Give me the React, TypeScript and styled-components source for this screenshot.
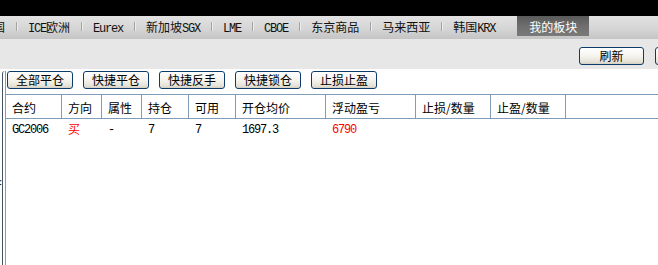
import React from 'react';
import styled, { createGlobalStyle } from 'styled-components';

const GlobalStyle = createGlobalStyle`
  html, body {
    margin: 0;
    padding: 0;
    background: #fff;
    overflow: hidden;
  }
  body {
    font-family: "Noto Sans CJK SC", "DejaVu Sans", sans-serif;
    font-size: 12px;
    color: #000;
  }
`;

const tabs = ['美国', 'ICE欧洲', 'Eurex', '新加坡SGX', 'LME', 'CBOE', '东京商品', '马来西亚', '韩国KRX'];
const actions = ['全部平仓', '快捷平仓', '快捷反手', '快捷锁仓', '止损止盈'];

const columns = [
  { title: '合约', width: 56 },
  { title: '方向', width: 40 },
  { title: '属性', width: 40 },
  { title: '持仓', width: 47 },
  { title: '可用', width: 47 },
  { title: '开仓均价', width: 90 },
  { title: '浮动盈亏', width: 90 },
  { title: '止损/数量', width: 75 },
  { title: '止盈/数量', width: 75 },
  { title: '', width: 160 },
];

const rows = [
  { code: 'GC2006', side: '买', attr: '-', hold: '7', avail: '7', price: '1697.3', pnl: '6790' },
];

// latin runs are set in a narrow mono face, like the old bitmap font of the terminal
const Mixed = ({ text }: { text: string }) => (
  <>
    {text.split(/([A-Za-z0-9.\-]+)/).map((part, i) =>
      /^[A-Za-z0-9.\-]+$/.test(part) ? <Latin key={i}>{part}</Latin> : part
    )}
  </>
);

const App = () => {
  return (
    <>
      <GlobalStyle />
      <Page>
        <TopBar />
        <TabBar>
          <TabStrip>
            {tabs.map((t, i) => (
              <React.Fragment key={t}>
                {i > 0 && <TabSep />}
                <Tab><Mixed text={t} /></Tab>
              </React.Fragment>
            ))}
            <Tab $active>我的板块</Tab>
          </TabStrip>
        </TabBar>
        <Toolbar>
          <Button $width={65}>刷新</Button>
          <Button $width={65}>设置</Button>
        </Toolbar>
        <Main>
          <Splitter>
            <SplitArrow>&lt;</SplitArrow>
          </Splitter>
          <Panel>
            <Content>
              <ActionRow>
                {actions.map(a => (
                  <Button key={a} $width={66}>{a}</Button>
                ))}
              </ActionRow>
              <Grid>
                <Table>
                  <thead>
                    <tr>
                      {columns.map((c, i) => (
                        <Th key={i} $width={c.width}>{c.title}</Th>
                      ))}
                    </tr>
                  </thead>
                  <tbody>
                    {rows.map(r => (
                      <tr key={r.code}>
                        <Td><Mixed text={r.code} /></Td>
                        <Td $red>{r.side}</Td>
                        <Td><Mixed text={r.attr} /></Td>
                        <Td><Mixed text={r.hold} /></Td>
                        <Td><Mixed text={r.avail} /></Td>
                        <Td><Mixed text={r.price} /></Td>
                        <Td $red><Mixed text={r.pnl} /></Td>
                        <Td />
                        <Td />
                        <Td />
                      </tr>
                    ))}
                  </tbody>
                </Table>
              </Grid>
            </Content>
          </Panel>
        </Main>
      </Page>
    </>
  );
};

const Page = styled.div`
  display: flex;
  flex-direction: column;
  height: 100vh;
  width: 100vw;
  overflow: hidden;
`;

const TopBar = styled.div`
  height: 16px;
  flex: none;
  background: #000;
`;

const TabBar = styled.div`
  height: 23px;
  flex: none;
  overflow: hidden;
  background: linear-gradient(#e2e2e2, #d4d4d4 60%, #c4c4c4);
`;

const TabStrip = styled.div`
  display: flex;
  align-items: flex-start;
  margin-left: -30px;
  white-space: nowrap;
`;

const Tab = styled.div<{ $active?: boolean }>`
  height: 20px;
  line-height: 21px;
  padding: ${p => (p.$active ? '0 12px' : '0 11px')};
  margin-left: ${p => (p.$active ? '11px' : '0')};
  font-size: 12px;
  color: ${p => (p.$active ? '#fff' : '#111')};
  background: ${p => (p.$active ? 'linear-gradient(#5a5a5a, #6e6e6e 50%, #7a7a7a)' : 'transparent')};
`;

const Latin = styled.span`
  font-family: "Liberation Mono", monospace;
  font-size: 12px;
  letter-spacing: -1.2px;
`;

const TabSep = styled.div`
  width: 1px;
  height: 9px;
  margin-top: 6px;
  background: #a2a2a2;
  box-shadow: 1px 0 0 #ececec;
`;

const Toolbar = styled.div`
  height: 30px;
  flex: none;
  display: flex;
  align-items: flex-start;
  justify-content: flex-end;
  gap: 11px;
  padding-top: 8px;
  box-sizing: border-box;
  margin-right: -62px;
  background: #e7e7e7;
`;

const Button = styled.button<{ $width: number }>`
  width: ${p => p.$width}px;
  height: 18px;
  padding: 0;
  box-sizing: border-box;
  border: 1px solid #0f3b6c;
  border-radius: 3px;
  background: linear-gradient(#ffffff, #f4f3ee 50%, #e6e3d8 85%, #d4cfc2);
  font-family: "Noto Sans CJK SC", sans-serif;
  font-size: 12px;
  line-height: 16px;
  color: #000;
`;

const Main = styled.div`
  flex: 1;
  display: flex;
  min-height: 0;
  padding-top: 2px;
`;

const Splitter = styled.div`
  position: relative;
  width: 2px;
  flex: none;
`;

const SplitArrow = styled.span`
  position: absolute;
  left: -5px;
  top: 106px;
  font-family: "DejaVu Sans Mono", monospace;
  font-size: 11px;
  line-height: 11px;
  color: #000;
`;

const Panel = styled.div`
  flex: 1;
  display: flex;
  border-left: 1px solid #44556a;
  border-top-left-radius: 3px;
  padding-left: 2px;
  min-width: 0;
`;

const Content = styled.div`
  flex: 1;
  display: flex;
  flex-direction: column;
  border-left: 1px solid #7f9db9;
  min-width: 0;
`;

const ActionRow = styled.div`
  display: flex;
  gap: 10px;
  padding-left: 1px;
  height: 18px;
`;

const Grid = styled.div`
  margin-top: 5px;
  flex: 1;
  border-top: 1px solid #7f9db9;
  overflow: hidden;
`;

const Table = styled.table`
  border-collapse: separate;
  border-spacing: 0;
  table-layout: fixed;
  width: 720px;
`;

const Th = styled.th<{ $width: number }>`
  width: ${p => p.$width}px;
  box-sizing: border-box;
  height: 24px;
  padding: 1px 0 0 6px;
  border-right: 1px solid #7f9db9;
  border-bottom: 1px solid #7f9db9;
  text-align: left;
  font-weight: normal;
  font-size: 12px;
  color: #000;
  white-space: nowrap;
`;

const Td = styled.td<{ $red?: boolean }>`
  height: 20px;
  padding: 0 0 0 6px;
  font-size: 12px;
  line-height: 16px;
  color: ${p => (p.$red ? '#ff0000' : '#000')};
  white-space: nowrap;
`;

export default App;
